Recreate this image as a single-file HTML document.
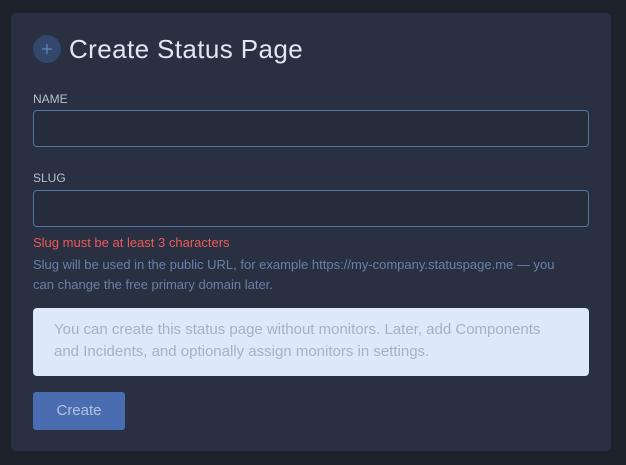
<!DOCTYPE html>
<html><head><style>
*{margin:0;padding:0;box-sizing:border-box}
body{width:626px;height:465px;background:#1d212b;font-family:"Liberation Sans",sans-serif;position:relative;overflow:hidden}
.card{position:absolute;left:11px;top:13px;width:600px;height:438px;background:#283041;border-radius:5px}
.abs{position:absolute}
.circ{left:22px;top:22px;width:28px;height:28px;border-radius:50%;background:#33476a}
h1{position:absolute;left:58px;top:21px;font-size:26px;font-weight:normal;color:#e1e6ef;letter-spacing:0.4px}
.lbl{left:22px;font-size:12px;color:#b8c0ce}
.inp{left:22px;width:556px;height:37px;border:1px solid #5a73a5;border-radius:4px;background:#252c3c}
.err{left:22px;top:222px;font-size:13px;color:#f0585a}
.help{left:22px;top:242px;width:538px;font-size:13px;line-height:20px;color:#6a80a8}
.alert{left:22px;top:295px;width:556px;height:68px;background:#dde8fb;border-radius:4px;padding:11px 30px 11px 21px;font-size:15px;line-height:22px;color:#a5b1c6}
.btn{left:22px;top:379px;width:92px;height:38px;background:#4a6db2;border-radius:3px;color:#b4c1dc;font-size:15px;text-align:center;line-height:38px}
</style></head><body>
<div class="card">
<div class="abs circ"><svg width="28" height="28" viewBox="0 0 28 28"><path d="M14 9.5v9M9.5 14h9" stroke="#5d87c8" stroke-width="1.3" stroke-linecap="round"/></svg></div>
<h1>Create Status Page</h1>
<div class="abs lbl" style="top:79px">NAME</div>
<div class="abs inp" style="top:97px"></div>
<div class="abs lbl" style="top:158px">SLUG</div>
<div class="abs inp" style="top:177px"></div>
<div class="abs err">Slug must be at least 3 characters</div>
<div class="abs help">Slug will be used in the public URL, for example https://my-company.statuspage.me — you can change the free primary domain later.</div>
<div class="abs alert">You can create this status page without monitors. Later, add Components and Incidents, and optionally assign monitors in settings.</div>
<div class="abs btn">Create</div>
</div>
</body></html>
